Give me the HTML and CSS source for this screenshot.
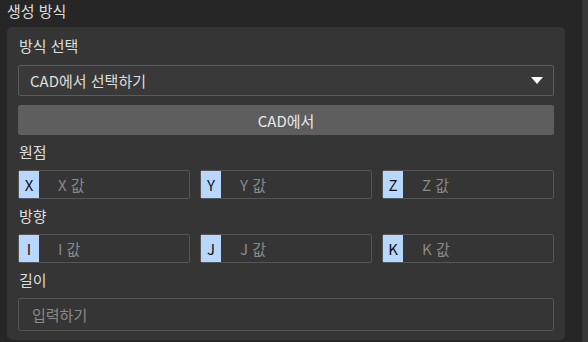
FILE: index.html
```html
<!DOCTYPE html>
<html lang="ko">
<head>
    <meta charset="UTF-8">
    <meta name="viewport" content="width=device-width, initial-scale=1.0">
    <title>생성 방식</title>
    <link rel="stylesheet" href="styles.css">
</head>
<body>

    <div class="layout">
        <div class="main">
            <div class="title">생성 방식</div>

            <div class="panel">
                <!-- Method -->
                <div class="label first">방식 선택</div>
                <div class="select">
                    <span>CAD에서 선택하기</span>
                    <svg class="caret" width="12" height="7" viewBox="0 0 12 7">
                        <path d="M0 0 H12 L6 7 Z" fill="#ffffff"/>
                    </svg>
                </div>
                <button class="action">CAD에서</button>

                <!-- Origin -->
                <div class="label">원점</div>
                <div class="row">
                    <div class="field"><span class="prefix">X</span><span class="hint">X 값</span></div>
                    <div class="field"><span class="prefix">Y</span><span class="hint">Y 값</span></div>
                    <div class="field"><span class="prefix">Z</span><span class="hint">Z 값</span></div>
                </div>

                <!-- Direction -->
                <div class="label">방향</div>
                <div class="row">
                    <div class="field"><span class="prefix">I</span><span class="hint">I 값</span></div>
                    <div class="field"><span class="prefix">J</span><span class="hint">J 값</span></div>
                    <div class="field"><span class="prefix">K</span><span class="hint">K 값</span></div>
                </div>

                <!-- Length -->
                <div class="label">길이</div>
                <div class="input-wide"><span class="hint">입력하기</span></div>
            </div>
        </div>
        <div class="scrollbar"></div>
    </div>

</body>
</html>
```

FILE: styles.css
```css
* {
    box-sizing: border-box;
    margin: 0;
    padding: 0;
}

body {
    font-family: "Noto Sans CJK KR", "Noto Sans", sans-serif;
    font-size: 15px;
    background-color: #262626;
    color: #dedede;
    width: 588px;
    height: 342px;
    overflow: hidden;
}

.layout {
    display: flex;
    height: 342px;
}

.main {
    width: 566px;
}

.scrollbar {
    margin-left: 16px;
    width: 6px;
    background-color: #383838;
}

.title {
    height: 27px;
    line-height: 22px;
    padding-left: 7px;
}

.panel {
    margin-left: 7px;
    width: 558px;
    height: 313px;
    background-color: #353535;
    border-radius: 5px;
    padding: 9px 11px 10px 11px;
}

.label {
    line-height: 20px;
    padding-left: 1px;
    margin-top: 7px;
    margin-bottom: 8px;
}

.label.first {
    margin-top: 0;
    margin-bottom: 9px;
}

.select {
    display: flex;
    align-items: center;
    justify-content: space-between;
    height: 31px;
    padding: 0 10px 0 11px;
    background-color: #393939;
    border: 1px solid #5c5c5c;
    border-radius: 2px;
}

.action {
    display: block;
    width: 100%;
    height: 30px;
    margin-top: 9px;
    background-color: #5e5e5e;
    border: none;
    border-radius: 2px;
    color: #e8e8e8;
    font-family: inherit;
    font-size: 15px;
    font-weight: normal;
}

.row {
    display: flex;
    gap: 10px;
}

.field {
    display: flex;
    align-items: stretch;
    flex: 1;
    height: 29px;
    border: 1px solid #555555;
    border-radius: 2px;
}

.prefix {
    width: 20px;
    background-color: #b8d7ff;
    color: #111111;
    display: flex;
    align-items: center;
    justify-content: center;
}

.hint {
    color: #8a8a8a;
    display: flex;
    align-items: center;
}

.field .hint {
    padding-left: 19px;
}

.input-wide {
    display: flex;
    height: 33px;
    padding-left: 13px;
    border: 1px solid #555555;
    border-radius: 2px;
}
```
